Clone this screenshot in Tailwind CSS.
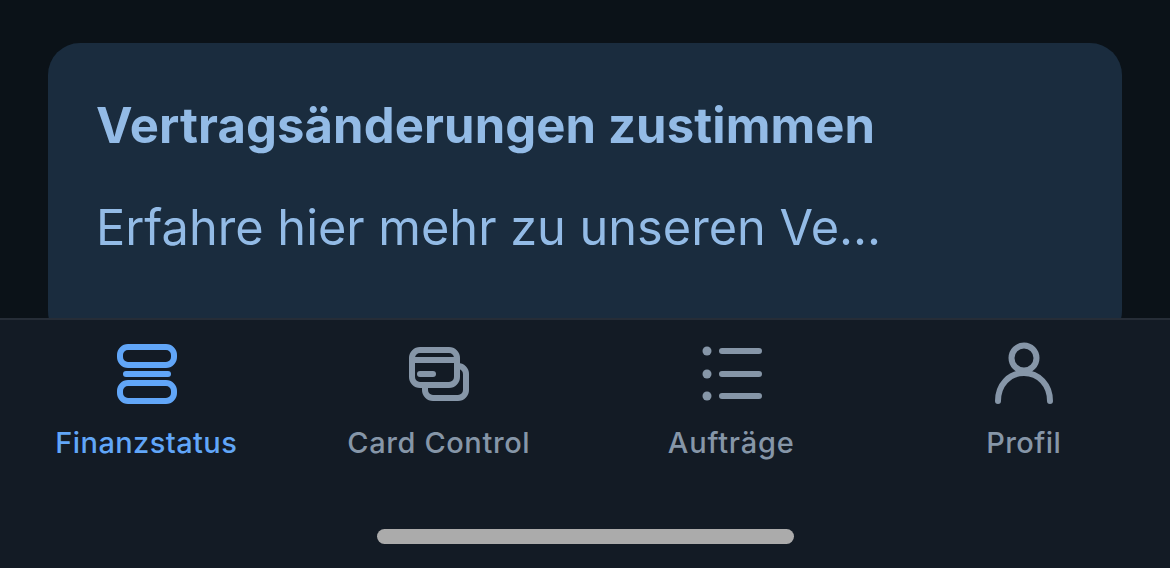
<!DOCTYPE html>
<html lang="de">
<head>
    <meta charset="UTF-8">
    <title>Finanzstatus</title>
    <script src="https://cdn.jsdelivr.net/npm/@tailwindcss/browser@4"></script>
</head>
<body class="bg-[#0b1218] font-['Inter','Noto_Sans',sans-serif]">
    <div class="w-[1170px] h-[568px] flex flex-col overflow-hidden">

        <div class="h-[318px] shrink-0 overflow-hidden px-[48px] pt-[43px]">
            <div class="h-[300px] bg-[#1a2c3e] rounded-[32px] pl-[48px] pt-[53px] text-[#93bbe6]">
                <h2 class="text-[49px] leading-[60px] tracking-[0.1px] font-bold whitespace-nowrap">Vertragsänderungen zustimmen</h2>
                <p class="mt-[42px] text-[48.700px] leading-[60px] whitespace-nowrap">Erfahre hier mehr zu unseren Ve...</p>
            </div>
        </div>

        <nav class="flex-1 bg-[#131b25] border-t-2 border-[#262d37] relative">
            <div class="grid grid-cols-4 pt-[23px] text-[#8696a8]">
                <div class="flex flex-col items-center text-[#61a6f8]">
                    <svg class="w-[60px] h-[60px] overflow-visible" viewBox="0 0 60 60" fill="none" stroke="currentColor" stroke-width="6">
                        <rect x="4" y="4" width="54" height="18" rx="8"/>
                        <rect x="4" y="40" width="54" height="18" rx="8"/>
                        <path d="M10 31h42" stroke-linecap="round"/>
                    </svg>
                    <span class="mt-[20px] text-[29px] leading-[40px] tracking-[0.4px] font-medium">Finanzstatus</span>
                </div>
                <div class="flex flex-col items-center">
                    <svg class="w-[60px] h-[60px] overflow-visible" viewBox="0 0 60 60" fill="none" stroke="currentColor" stroke-width="6">
                        <rect x="3" y="7" width="45" height="35" rx="8"/>
                        <path d="M3 17h45"/>
                        <path d="M48 23h1a8 8 0 0 1 8 8v16a8 8 0 0 1-8 8h-25a8 8 0 0 1-8-8v-5"/>
                        <path d="M11 31h13" stroke-linecap="round"/>
                    </svg>
                    <span class="mt-[20px] text-[29px] leading-[40px] tracking-[0.6px] font-medium">Card Control</span>
                </div>
                <div class="flex flex-col items-center">
                    <svg class="w-[60px] h-[60px] overflow-visible" viewBox="0 0 60 60" fill="none" stroke="currentColor">
                        <circle cx="6" cy="8" r="4.500" fill="currentColor" stroke="none"/>
                        <circle cx="6" cy="31" r="4.500" fill="currentColor" stroke="none"/>
                        <circle cx="6" cy="53" r="4.500" fill="currentColor" stroke="none"/>
                        <path d="M21 8h37M21 31h37M21 53h37" stroke-width="6" stroke-linecap="round"/>
                    </svg>
                    <span class="mt-[20px] text-[29px] leading-[40px] tracking-[0.8px] font-medium">Aufträge</span>
                </div>
                <div class="flex flex-col items-center">
                    <svg class="w-[60px] h-[60px] overflow-visible" viewBox="0 0 60 60" fill="none" stroke="currentColor" stroke-width="6" stroke-linecap="round">
                        <circle cx="30" cy="15" r="12.500"/>
                        <path d="M4 58c0-16 11-28 26-28s26 12 26 28"/>
                    </svg>
                    <span class="mt-[20px] text-[29px] leading-[40px] tracking-[0.4px] font-medium">Profil</span>
                </div>
            </div>
            <div class="absolute left-[377px] bottom-[24px] w-[417px] h-[15px] rounded-full bg-[#ababab]"></div>
        </nav>
    </div>
</body>
</html>
